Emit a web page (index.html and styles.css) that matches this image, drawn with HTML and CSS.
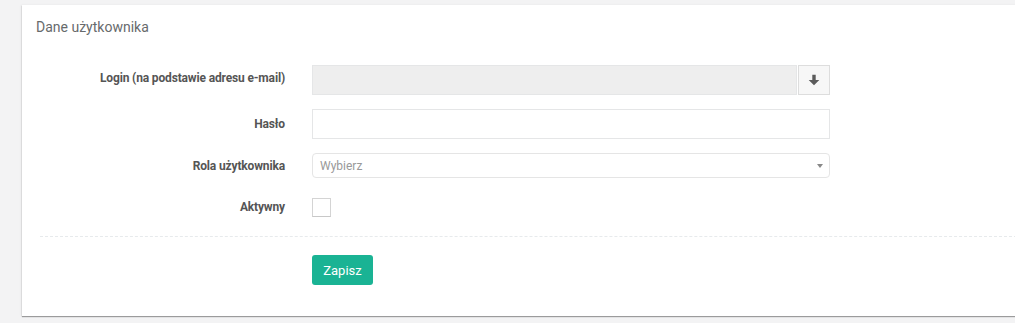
FILE: index.html
```html
<!DOCTYPE html>
<html lang="pl">
<head>
<meta charset="utf-8">
<title>Dane użytkownika</title>
<link rel="stylesheet" href="styles.css">
</head>
<body>
<div class="card">
  <div class="card-title">Dane użytkownika</div>
  <form class="form">
    <div class="grid">
      <label class="label">Login (na podstawie adresu e-mail)</label>
      <div class="input-group">
        <div class="input readonly"></div>
        <button type="button" class="addon">
          <svg width="12" height="12" viewBox="0 0 12 12"><path d="M4.3 0.8h3.4v5.2h3.6L6 11.3 0.7 6h3.6z" fill="#5b5b5b"/></svg>
        </button>
      </div>

      <label class="label">Hasło</label>
      <div class="input"></div>

      <label class="label">Rola użytkownika</label>
      <div class="select">
        <span class="placeholder">Wybierz</span>
        <span class="caret"></span>
      </div>

      <label class="label">Aktywny</label>
      <div class="check-cell"><span class="checkbox"></span></div>
    </div>
    <div class="divider"></div>
    <div class="actions">
      <button type="button" class="btn">Zapisz</button>
    </div>
  </form>
</div>
</body>
</html>
```
FILE: styles.css
```css
html, body {
  margin: 0;
  padding: 0;
}
body {
  background: #f3f3f4;
  font-family: Roboto, "Liberation Sans", sans-serif;
  color: #676a6c;
  overflow: hidden;
  width: 1015px;
  height: 323px;
}
.card {
  margin: 5px 0 0 22px;
  width: 1010px;
  background: #fff;
  box-shadow: 0 1px 1px rgba(0,0,0,0.35), -1px 0 2px rgba(0,0,0,0.06);
  padding-bottom: 31px;
}
.card-title {
  padding: 13px 14px 0;
  font-size: 14px;
  line-height: 18px;
  color: #676a6c;
}
.form {
  padding: 29px 0 0 18px;
}
.grid {
  display: grid;
  grid-template-columns: 245px 518px;
  column-gap: 27px;
  row-gap: 14px;
  align-items: center;
}
.label {
  text-align: right;
  font-size: 12px;
  font-weight: 700;
  letter-spacing: -0.15px;
  color: #555;
  line-height: 16px;
}
.label:first-child {
  position: relative;
  top: -2px;
}
.input-group {
  display: flex;
  height: 30px;
}
.input {
  box-sizing: border-box;
  height: 30px;
  border: 1px solid #e5e6e7;
  background: #fff;
}
.input.readonly {
  flex: 1;
  background: #eee;
}
.addon {
  box-sizing: border-box;
  width: 32px;
  height: 30px;
  margin: 0 0 0 1px;
  padding: 0;
  border: 1px solid #ddd;
  background: #f7f7f7;
  display: flex;
  align-items: center;
  justify-content: center;
}
.select {
  box-sizing: border-box;
  height: 25px;
  border: 1px solid #e5e5e5;
  border-radius: 4px;
  display: flex;
  align-items: center;
  justify-content: space-between;
  padding: 0 6px 0 7px;
}
.placeholder {
  font-size: 12px;
  color: #999;
}
.caret {
  width: 0;
  height: 0;
  border-left: 3.5px solid transparent;
  border-right: 3.5px solid transparent;
  border-top: 4px solid #888;
}
.check-cell {
  height: 30px;
  display: flex;
  align-items: center;
}
.checkbox {
  box-sizing: border-box;
  width: 19px;
  height: 19px;
  border: 1px solid #d4d4d4;
  border-bottom-color: #c8c8c8;
  background: #fff;
}
.divider {
  margin-top: 14px;
  border-top: 1px dashed #e7eaec;
}
.actions {
  padding: 18px 0 0 272px;
}
.btn {
  height: 30px;
  width: 61px;
  padding: 0;
  border: 0;
  border-radius: 3px;
  background: #1ab394;
  color: #fff;
  font-family: Roboto, "Liberation Sans", sans-serif;
  font-size: 13px;
}
```
